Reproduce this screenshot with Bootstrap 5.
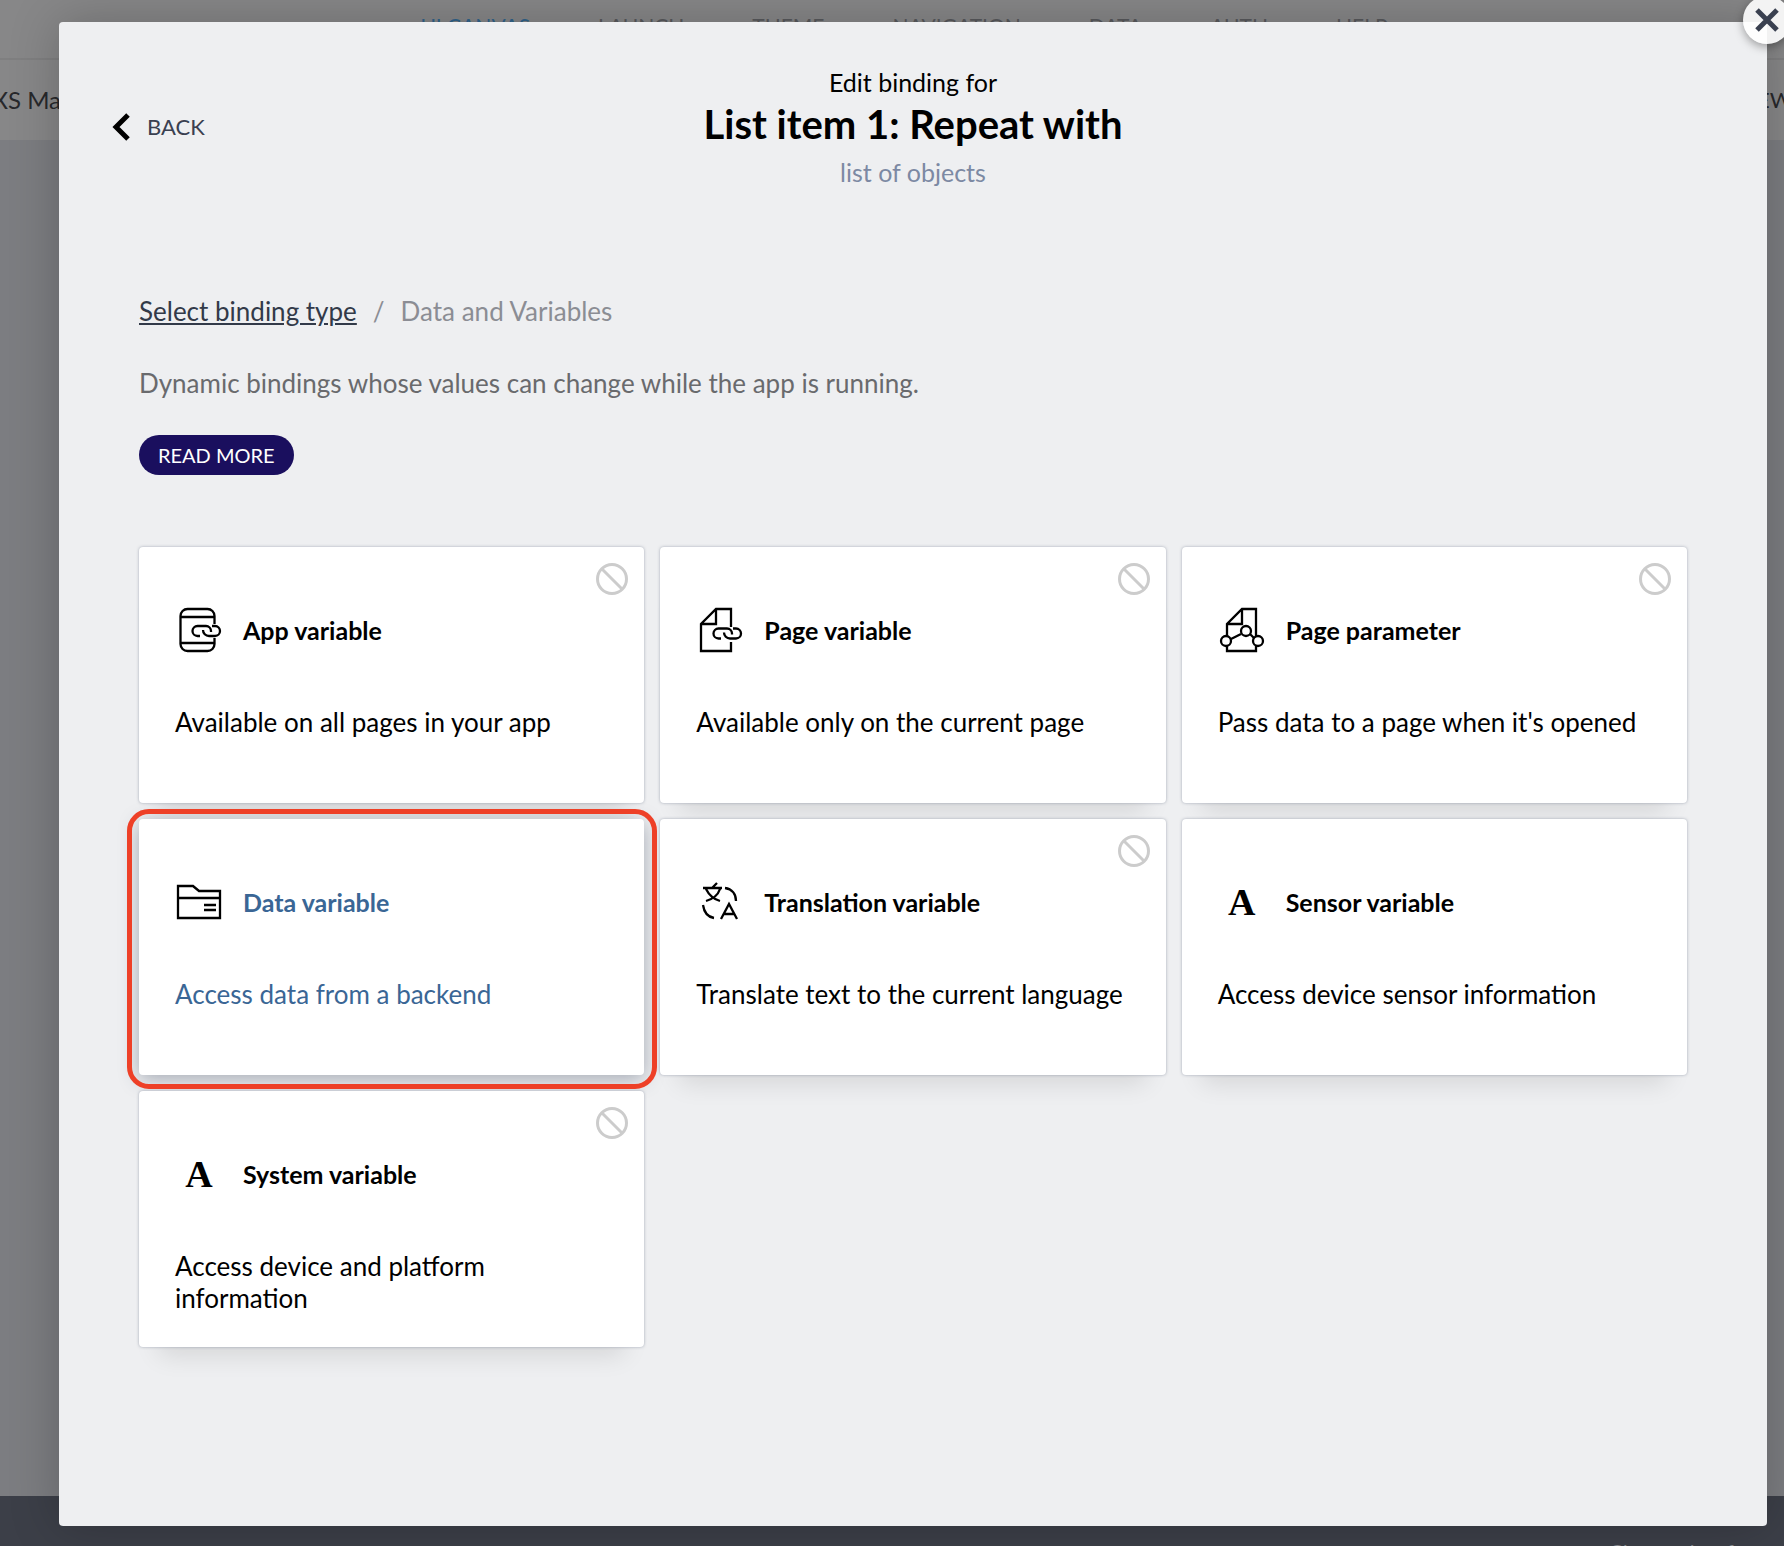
<!DOCTYPE html>
<html lang="en">
<head>
<meta charset="utf-8">
<meta name="viewport" content="width=device-width, initial-scale=1">
<title>Edit binding</title>
<link href="https://cdn.jsdelivr.net/npm/bootstrap@5.3.0/dist/css/bootstrap.min.css" rel="stylesheet">
<style>
  body { font-family: Lato, "Open Sans", sans-serif; font-size: 25px; line-height: 32px; font-variant-ligatures: none; color: #000; background: #7c7d81; }
  .app-shell { height: 100vh; }
  .top-nav { height: 60px; gap: 68px; padding: 0 0 6px 24px; background: #878788; border-bottom: 2px solid #7f7f80; font-size: 21px; }
  .top-nav a { color: #58595c; }
  .top-nav a.current { color: #2f638c; }
  .tool-row { height: 80px; background: #878788; color: #27282b; font-size: 24px; }
  .device-name { width: 73px; }
  .preview-label { width: 48px; font-size: 22px; }
  .status-bar { height: 50px; padding: 39px 32px 0 0; background: #3c3f48; color: #8b8d92; font-size: 20px; }
  .overlay { padding: 22px 17px 20px 59px; }
  .dialog-panel { min-height: calc(100vh - 42px); background: #eeeff1; border-radius: 4px; box-shadow: 0 0 50px rgba(0,0,0,.22); padding: 44px 80px; }
  .close-btn { top: -26px; right: -24px; width: 48px; height: 48px; background: rgba(255,255,255,.9); box-shadow: 0 3px 10px rgba(0,0,0,.35); }
  .back-btn { top: 88px; left: 52px; gap: 16px; font-size: 22px; color: #3a4050; }
  .dialog-title { font-size: 40px; line-height: 48px; font-weight: 700; margin: 2px 0 8px; }
  .dialog-sub { color: #7c89a3; }
  .crumbs { margin-top: 107px; gap: 16px; font-size: 26px; color: #8b8d94; }
  .crumbs a { color: #323a49; }
  .intro { margin: 40px 0 36px; font-size: 26px; color: #696a6d; }
  .read-btn { height: 40px; padding: 0 19px; border-radius: 20px; background: #1a0f5e; color: #fff; font-size: 20px; line-height: 38px; }
  .read-btn:hover { background: #2a1c80; color: #fff; }
  .tiles { margin-top: 56px; --bs-gutter-x: 16px; --bs-gutter-y: 16px; }
  .tile, .tile:hover { min-height: 256px; padding: 59px 36px 32px; border-radius: 4px; background: #fff; color: #000; box-shadow: 0 0 3px rgba(90,100,125,.5), 0 28px 24px -20px rgba(0,0,0,.11); }
  .tile-head { gap: 20px; font-weight: 700; font-size: 25px; line-height: 32px; }
  .tile-icon { width: 48px; height: 48px; flex: none; fill: none; stroke: #000; stroke-width: 2.3; }
  .tile-letter { width: 48px; font: 700 38px/48px "Liberation Serif", serif; color: #000; }
  .tile-text { margin-top: 52px; font-size: 26px; line-height: 32px; }
  .tile.is-picked, .tile.is-picked:hover { color: #3a6695; box-shadow: 0 4px 20px rgba(50,62,85,.4); }
  .no-entry { top: 16px; right: 16px; width: 32px; height: 32px; fill: none; stroke: #ccc; stroke-width: 3; }
  .ring { inset: -10px -13px -14px -12px; border: 5px solid #ee4027; border-radius: 22px; pointer-events: none; z-index: 2; }
</style>
</head>
<body class="overflow-hidden">
<div class="app-shell d-flex flex-column">
  <nav class="top-nav d-flex justify-content-center align-items-center">
    <a class="current text-decoration-none" href="#">UI CANVAS</a>
    <a class="text-decoration-none" href="#">LAUNCH</a>
    <a class="text-decoration-none" href="#">THEME</a>
    <a class="text-decoration-none" href="#">NAVIGATION</a>
    <a class="text-decoration-none" href="#">DATA</a>
    <a class="text-decoration-none" href="#">AUTH</a>
    <a class="text-decoration-none" href="#">HELP</a>
  </nav>
  <div class="tool-row d-flex justify-content-between align-items-center">
    <div class="device-name d-flex justify-content-end overflow-hidden text-nowrap">XS Max</div>
    <div class="preview-label overflow-hidden text-nowrap">VIEW</div>
  </div>
  <div class="flex-grow-1"></div>
  <footer class="status-bar text-end overflow-hidden">Changes just for</footer>
</div>

<div class="overlay position-absolute top-0 start-0 w-100">
  <main class="dialog-panel position-relative" role="dialog" aria-labelledby="dlg-title">
    <button class="close-btn btn rounded-circle border-0 p-0 position-absolute d-flex align-items-center justify-content-center" type="button" aria-label="Close">
      <svg width="24" height="24" viewBox="0 0 24 24" stroke="#3a4050" stroke-width="5"><path d="M2 2l20 20M22 2L2 22"/></svg>
    </button>
    <button class="back-btn btn border-0 p-0 position-absolute d-flex align-items-center" type="button">
      <svg width="20" height="32" viewBox="0 0 20 32" fill="none" stroke="#000" stroke-width="5"><path d="M17 4L5 16l12 12"/></svg>
      BACK
    </button>
    <header class="text-center">
      <div>Edit binding for</div>
      <h1 class="dialog-title" id="dlg-title">List item 1: Repeat with</h1>
      <div class="dialog-sub">list of objects</div>
    </header>

    <nav class="crumbs d-flex" aria-label="Breadcrumb">
      <a href="#">Select binding type</a><span>/</span><span>Data and Variables</span>
    </nav>
    <p class="intro">Dynamic bindings whose values can change while the app is running.</p>
    <button class="read-btn btn border-0" type="button">READ MORE</button>

    <div class="tiles row row-cols-3">
      <div class="col">
        <button class="tile btn border-0 w-100 h-100 text-start position-relative d-flex flex-column" type="button">
          <svg class="no-entry position-absolute" viewBox="0 0 32 32"><circle cx="16" cy="16" r="14.5"/><path d="M6 6l20 20"/></svg>
          <span class="tile-head d-flex align-items-center">
            <svg class="tile-icon" viewBox="0 0 48 48"><path d="M39.500 18V10a7 7 0 0 0-7-7H12.500a7 7 0 0 0-7 7V38a7 7 0 0 0 7 7H32.500a7 7 0 0 0 7-7V32M5.500 11H39.500M5.500 37H39.500"/><path d="M25 30H22.500a5 5 0 0 1 0-10H31a5 5 0 0 1 5 5v1M28 24a6 6 0 0 0 6 6H40a5 5 0 0 0 0-10H37"/></svg>
            App variable</span>
          <span class="tile-text">Available on all pages in your app</span>
        </button>
      </div>
      <div class="col">
        <button class="tile btn border-0 w-100 h-100 text-start position-relative d-flex flex-column" type="button">
          <svg class="no-entry position-absolute" viewBox="0 0 32 32"><circle cx="16" cy="16" r="14.500"/><path d="M6 6l20 20"/></svg>
          <span class="tile-head d-flex align-items-center">
            <svg class="tile-icon" viewBox="0 0 48 48"><path d="M35 21V3H20L5 18V45H35V36M20 3V18H5"/><path d="M25 32.500H22.500a5 5 0 0 1 0-10H31a5 5 0 0 1 5 5v1M28 26.500a6 6 0 0 0 6 6H40a5 5 0 0 0 0-10H37"/></svg>
            Page variable</span>
          <span class="tile-text">Available only on the current page</span>
        </button>
      </div>
      <div class="col">
        <button class="tile btn border-0 w-100 h-100 text-start position-relative d-flex flex-column" type="button">
          <svg class="no-entry position-absolute" viewBox="0 0 32 32"><circle cx="16" cy="16" r="14.500"/><path d="M6 6l20 20"/></svg>
          <span class="tile-head d-flex align-items-center">
            <svg class="tile-icon" viewBox="0 0 48 48"><path d="M9 30V18L24 3H38V30M24 3V18H9M9 40V45H38V40M13 33L23 28M32 28L36 32"/><circle cx="8" cy="35" r="5"/><circle cx="28" cy="25" r="5"/><circle cx="40" cy="35" r="5"/></svg>
            Page parameter</span>
          <span class="tile-text">Pass data to a page when it's opened</span>
        </button>
      </div>
      <div class="col">
        <div class="position-relative h-100">
          <button class="tile is-picked btn border-0 w-100 h-100 text-start position-relative d-flex flex-column" type="button">
            <span class="tile-head d-flex align-items-center">
              <svg class="tile-icon" viewBox="0 0 48 48"><path d="M3 8H18L24 13H45V40H3ZM3 20H45M29 27H41M29 32H41"/></svg>
              Data variable</span>
            <span class="tile-text">Access data from a backend</span>
          </button>
          <div class="ring position-absolute"></div>
        </div>
      </div>
      <div class="col">
        <button class="tile btn border-0 w-100 h-100 text-start position-relative d-flex flex-column" type="button">
          <svg class="no-entry position-absolute" viewBox="0 0 32 32"><circle cx="16" cy="16" r="14.500"/><path d="M6 6l20 20"/></svg>
          <span class="tile-head d-flex align-items-center">
            <svg class="tile-icon" viewBox="0 0 48 48"><path d="M7 10H26M21 5L16 10M10 11C13 17 17 21 24 23M24 11C22 17 17 21 10 23M29 10C36 11 40 16 40 23M7 27C8 34 12 39 18 40M25 41L33 26L41 41M28 36H38"/></svg>
            Translation variable</span>
          <span class="tile-text">Translate text to the current language</span>
        </button>
      </div>
      <div class="col">
        <button class="tile btn border-0 w-100 h-100 text-start position-relative d-flex flex-column" type="button">
          <span class="tile-head d-flex align-items-center"><span class="tile-letter text-center">A</span>Sensor variable</span>
          <span class="tile-text">Access device sensor information</span>
        </button>
      </div>
      <div class="col">
        <button class="tile btn border-0 w-100 h-100 text-start position-relative d-flex flex-column" type="button">
          <svg class="no-entry position-absolute" viewBox="0 0 32 32"><circle cx="16" cy="16" r="14.500"/><path d="M6 6l20 20"/></svg>
          <span class="tile-head d-flex align-items-center"><span class="tile-letter text-center">A</span>System variable</span>
          <span class="tile-text">Access device and platform information</span>
        </button>
      </div>
    </div>
  </main>
</div>
<script src="https://cdn.jsdelivr.net/npm/bootstrap@5.3.0/dist/js/bootstrap.bundle.min.js"></script>
</body>
</html>
